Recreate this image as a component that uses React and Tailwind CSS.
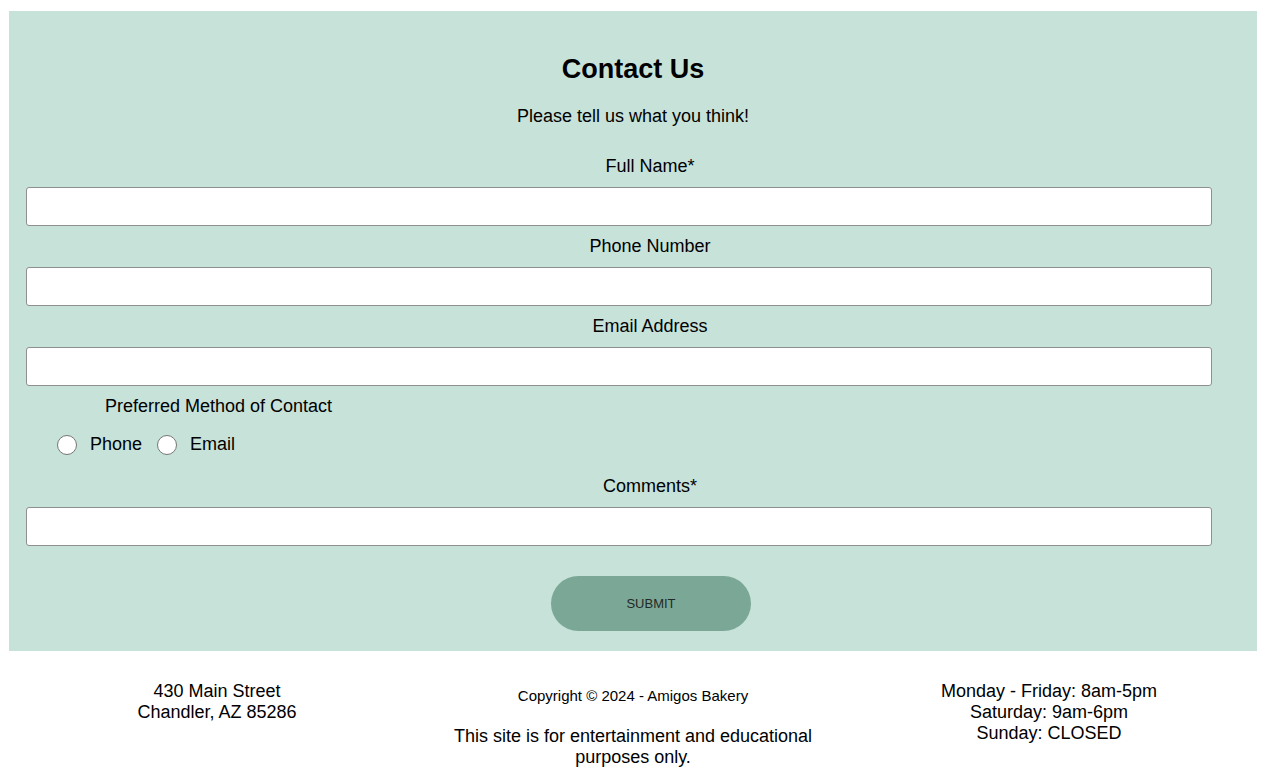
import React from 'react';

const fields = [
  { id: 'fullName', label: 'Full Name*' },
  { id: 'phone', label: 'Phone Number' },
  { id: 'email', label: 'Email Address' },
];

const Field = ({ id, label, first }) => (
  <div className={first ? 'mt-[29px]' : 'mt-[10px]'}>
    <label htmlFor={id} className="block pl-[34px] text-center text-[18px] leading-[21px]">
      {label}
    </label>
    <input
      id={id}
      type="text"
      className="mt-[10px] ml-[17px] block h-[39px] w-[1186px] rounded-[3px] border border-[#8f8f8f] bg-white"
    />
  </div>
);

const Radio = ({ name, value, label }) => (
  <label className="flex items-center">
    <input
      type="radio"
      name={name}
      value={value}
      className="h-[20px] w-[20px] appearance-none rounded-full border border-[#767676] bg-white"
    />
    <span className="ml-[13px] text-[18px] leading-[21px]">{label}</span>
  </label>
);

export default function App() {
  return (
    <div className="min-h-screen bg-white text-black" style={{ fontFamily: '"Liberation Sans", Arial, sans-serif' }}>
      <section className="ml-[9px] mt-[11px] w-[1248px] bg-[#c7e2d9] pt-[43px] pb-[20px]">
        <h2 className="text-center text-[27px] font-bold leading-[31px]">Contact Us</h2>
        <p className="mt-[21px] text-center text-[18px] leading-[21px]">Please tell us what you think!</p>

        <form onSubmit={(e) => e.preventDefault()}>
          {fields.map((f, i) => (
            <Field key={f.id} id={f.id} label={f.label} first={i === 0} />
          ))}

          <fieldset className="mt-[10px]">
            <legend className="pl-[96px] text-[18px] leading-[21px]">Preferred Method of Contact</legend>
            <div className="mt-[17px] ml-[48px] flex items-center gap-[15px]">
              <Radio name="contact" value="phone" label="Phone" />
              <Radio name="contact" value="email" label="Email" />
            </div>
          </fieldset>

          <div className="mt-[21px]">
            <label htmlFor="comments" className="block pl-[34px] text-center text-[18px] leading-[21px]">
              Comments*
            </label>
            <input
              id="comments"
              type="text"
              className="mt-[10px] ml-[17px] block h-[39px] w-[1186px] rounded-[3px] border border-[#8f8f8f] bg-white"
            />
          </div>

          <div className="mt-[30px] flex justify-center pl-[36px]">
            <button
              type="submit"
              className="h-[55px] w-[200px] rounded-full bg-[#7ba796] text-[13px] text-[#1f2a26]"
            >
              SUBMIT
            </button>
          </div>
        </form>
      </section>

      <footer className="ml-[9px] grid w-[1248px] grid-cols-3 pt-[30px] text-center text-[18px] leading-[21px]">
        <div>
          <p>430 Main Street</p>
          <p>Chandler, AZ 85286</p>
        </div>
        <div className="px-[20px]">
          <p className="mt-[6px] text-[15px] leading-[17px]">Copyright © 2024 - Amigos Bakery</p>
          <p className="mt-[22px]">This site is for entertainment and educational purposes only.</p>
        </div>
        <div>
          <p>Monday - Friday: 8am-5pm</p>
          <p>Saturday: 9am-6pm</p>
          <p>Sunday: CLOSED</p>
        </div>
      </footer>
    </div>
  );
}
